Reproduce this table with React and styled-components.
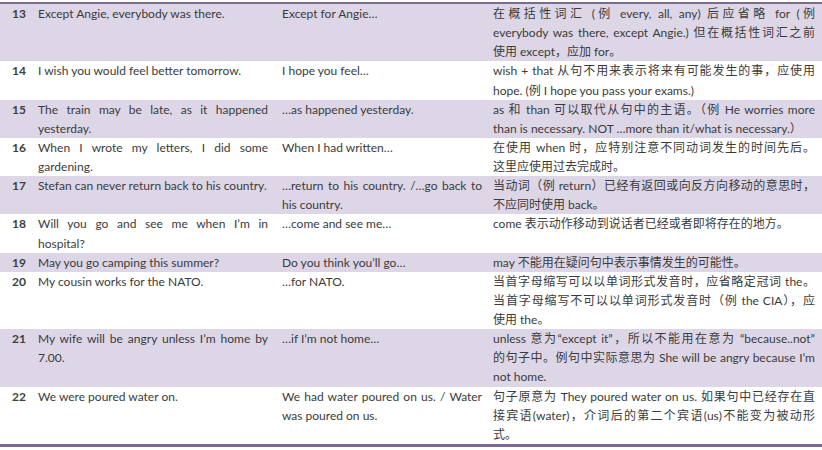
import React from "react";
import styled, {createGlobalStyle} from "styled-components";

const Global = createGlobalStyle`
  html, body {
    margin: 0;
    padding: 0;
    background: #ffffff;
  }
`;

const Page = styled.div`
  width: 822px;
  padding-top: 2px;
`;
const Table = styled.table`
  width: 822px;
  border-collapse: collapse;
  table-layout: fixed;
  border-top: 2px solid #7c6a92;
  border-bottom: 3px solid #7c6a92;
  font-family: Lato, "Noto Sans CJK SC", sans-serif;
  font-size: 12px;
  line-height: 19.13px;
  color: #3b3b3b;
`;
const Row = styled.tr`
  background: ${p => (p.$band ? "#ddd6e7" : "#ffffff")};
`;
const Num = styled.td`
  box-sizing: border-box;
  width: 33px;
  padding: 0 0 0 12px;
  vertical-align: top;
  font-weight: bold;
  color: #404040;
`;
const Cell = styled.td`
  box-sizing: border-box;
  width: ${p => p.$w}px;
  padding: 0 ${p => p.$pr}px 0 5px;
  vertical-align: top;
`;
const Line = styled.div`
  text-align: justify;
  text-align-last: ${p => (p.$last ? "left" : "justify")};
`;

const rows = [
  {
    n: 13,
    a: ["Except Angie, everybody was there."],
    b: ["Except for Angie…"],
    c: [
      "在概括性词汇 (例 every, all, any) 后应省略 for (例",
      "everybody was there, except Angie.) 但在概括性词汇之前",
      "使用 except，应加 for。",
    ],
  },
  {
    n: 14,
    a: ["I wish you would feel better tomorrow."],
    b: ["I hope you feel…"],
    c: [
      "wish + that 从句不用来表示将来有可能发生的事，应使用",
      "hope. (例  I hope you pass your exams.)",
    ],
  },
  {
    n: 15,
    a: ["The train may be late, as it happened", "yesterday."],
    b: ["…as happened yesterday."],
    c: [
      "as 和 than 可以取代从句中的主语。（例 He worries more",
      "than is necessary. NOT …more than it/what is necessary.）",
    ],
  },
  {
    n: 16,
    a: ["When I wrote my letters, I did some", "gardening."],
    b: ["When I had written…"],
    c: ["在使用 when 时，应特别注意不同动词发生的时间先后。", "这里应使用过去完成时。"],
  },
  {
    n: 17,
    a: ["Stefan can never return back to his country."],
    b: ["…return to his country. /…go back to", "his country."],
    c: ["当动词（例 return）已经有返回或向反方向移动的意思时，", "不应同时使用 back。"],
  },
  {
    n: 18,
    a: ["Will you go and see me when I’m in", "hospital?"],
    b: ["…come and see me…"],
    c: ["come 表示动作移动到说话者已经或者即将存在的地方。"],
  },
  {
    n: 19,
    a: ["May you go camping this summer?"],
    b: ["Do you think you’ll go…"],
    c: ["may 不能用在疑问句中表示事情发生的可能性。"],
  },
  {
    n: 20,
    a: ["My cousin works for the NATO."],
    b: ["…for NATO."],
    c: [
      "当首字母缩写可以以单词形式发音时，应省略定冠词 the。",
      "当首字母缩写不可以以单词形式发音时（例 the CIA），应",
      "使用 the。",
    ],
  },
  {
    n: 21,
    a: ["My wife will be angry unless I’m home by", "7.00."],
    b: ["…if I’m not home…"],
    c: [
      "unless 意为“except it”，所以不能用在意为 “because..not”",
      "的句子中。例句中实际意思为 She will be angry because I’m",
      "not home.",
    ],
  },
  {
    n: 22,
    a: ["We were poured water on."],
    b: ["We had water poured on us. / Water", "was poured on us."],
    c: [
      "句子原意为 They poured water on us. 如果句中已经存在直",
      "接宾语(water)，介词后的第二个宾语(us)不能变为被动形",
      "式。",
    ],
  },
];

const Lines = ({lines}) =>
  lines.map((t, i) => <Line key={i} $last={i === lines.length - 1}>{t}</Line>);

const Entry = ({row, band}) => (
  <Row $band={band}>
    <Num>{row.n}</Num>
    <Cell $w={244} $pr={9}><Lines lines={row.a}/></Cell>
    <Cell $w={211} $pr={6}><Lines lines={row.b}/></Cell>
    <Cell $w={334} $pr={7}><Lines lines={row.c}/></Cell>
  </Row>
);

export default function App() {
  return (
    <Page>
      <Global/>
      <Table>
        <tbody>
          {rows.map((r, i) => <Entry key={r.n} row={r} band={i % 2 === 0}/>)}
        </tbody>
      </Table>
    </Page>
  );
}
